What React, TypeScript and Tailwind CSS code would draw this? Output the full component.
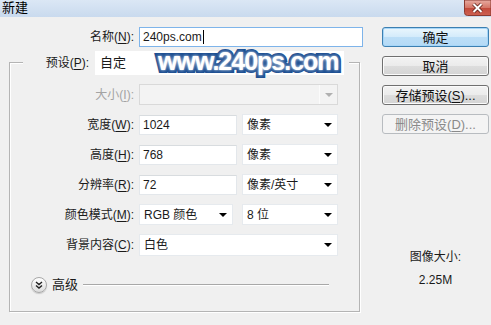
import React from "react";

const Arrow = ({ c = "#000" }: { c?: string }) => (
  <svg width="8" height="4" viewBox="0 0 8 4">
    <path d="M0 0H8L4 4Z" fill={c} />
  </svg>
);

function Lbl({ pre, k, disabled, w = "w-[124px]" }: { pre: string; k: string; disabled?: boolean; w?: string }) {
  return (
    <span className={`${w} shrink-0 text-right leading-[20px] ${disabled ? "text-[#a3a3a3]" : "text-[#1a1a1a]"}`}>
      {pre}(<span className="underline underline-offset-2">{k}</span>):
    </span>
  );
}

function Combo({ text, w, h = "h-[21px]" }: { text: string; w: string; h?: string }) {
  return (
    <div className={`${w} ${h} shrink-0 bg-white border border-[#e6eaee] flex items-center justify-between pl-[4px] pr-[5px]`}>
      <span className="leading-none">{text}</span>
      <Arrow />
    </div>
  );
}

function Input({ text, w }: { text: string; w: string }) {
  return (
    <div className={`${w} h-[20px] shrink-0 bg-white border border-[#e3e7eb] border-t-[#d8dcdf] flex items-center pl-[3px]`}>
      <span className="leading-none">{text}</span>
    </div>
  );
}

function Btn({ children, primary, disabled }: { children: React.ReactNode; primary?: boolean; disabled?: boolean }) {
  const cls = disabled
    ? "border-[#b8bcc0] bg-[#f4f4f4] text-[#8a8a8a]"
    : primary
    ? "border-[#3c7fb1] bg-[linear-gradient(to_bottom,#eaf6fd,#d3ebfb_50%,#bcdef7_51%,#b4daf6)] text-[#111] shadow-[inset_0_0_0_1px_#a6d6f8]"
    : "border-[#707070] bg-[linear-gradient(to_bottom,#f3f3f3,#ebebeb_50%,#dddddd_51%,#d4d4d4)] text-[#111] shadow-[inset_0_0_0_1px_#fbfbfb]";
  return (
    <div className={`w-[107px] h-[20px] rounded-[3px] border flex items-center justify-center leading-none ${cls}`}>
      {children}
    </div>
  );
}

function CloseIcon() {
  return (
    <svg width="27" height="16" viewBox="0 0 27 16">
      <defs>
        <linearGradient id="cg" x1="0" y1="0" x2="0" y2="1">
          <stop offset="0" stopColor="#e7aca2" />
          <stop offset="0.5" stopColor="#d57667" />
          <stop offset="0.51" stopColor="#c24a3b" />
          <stop offset="1" stopColor="#cd6152" />
        </linearGradient>
      </defs>
      <path d="M0.5 0V12.5Q0.5 15.5 3.5 15.5H27V0Z" fill="url(#cg)" stroke="#8a3b32" strokeWidth="1" />
      <path d="M9.5 4L17.5 12M17.5 4L9.5 12" stroke="#5e1f16" strokeWidth="3.6" />
      <path d="M9.5 4L17.5 12M17.5 4L9.5 12" stroke="#ffffff" strokeWidth="2" />
    </svg>
  );
}

export default function App() {
  return (
    <div className="w-[491px] h-[325px] bg-[#f0f0f0] relative overflow-hidden text-[12px] font-['Liberation_Sans','Noto_Sans_CJK_SC',sans-serif] text-[#1a1a1a]">
      {/* title bar */}
      <div className="h-[17px] bg-[linear-gradient(to_bottom,#dbe7f5,#c9daee)] flex items-start justify-between">
        <span className="pl-[2px] pt-[1px] leading-[14px] text-[13px] text-black">新建</span>
        <div className="shrink-0 leading-none flex">
          <CloseIcon />
        </div>
      </div>

      <div className="flex">
        {/* left column */}
        <div className="flex flex-col">
          <div className="flex mt-[10px] items-center">
            <Lbl pre="名称" k="N" w="w-[134px]" />
            <div className="ml-[5px] w-[224px] h-[20px] bg-white border border-[#7eb4ea] flex items-center pl-[3px]">
              <span className="leading-none">240ps.com</span>
              <span className="w-px h-[14px] bg-black ml-[1px]" />
            </div>
          </div>

          {/* group box */}
          <div className="ml-[9px] mt-[15px] w-[351px] border border-[#b4b4b4] shadow-[1px_1px_0_#ffffff,inset_1px_1px_0_#ffffff] flex flex-col pb-[18px]">
            <div className="-mt-[12px] ml-[13px] w-[326px] h-[24px] bg-[#f0f0f0] flex items-center">
              <Lbl pre="预设" k="P" w="w-[66px]" />
              <div className="ml-[6px] w-[249px] h-[24px] bg-white flex items-center pl-[5px] text-[13px]">自定</div>
            </div>

            <div className="flex flex-col gap-[9px] mt-[9px]">
              <div className="flex items-center h-[21px]">
                <Lbl pre="大小" k="I" disabled />
                <div className="ml-[5px] w-[199px] h-[21px] border border-[#d9d9d9] bg-[#f3f3f3] flex items-center justify-end">
                  <div className="h-full w-[18px] border-l border-[#fbfbfb] flex items-center justify-center">
                    <Arrow c="#b0b0b0" />
                  </div>
                </div>
              </div>
              <div className="flex items-center h-[21px]">
                <Lbl pre="宽度" k="W" />
                <div className="ml-[5px]"><Input text="1024" w="w-[98px]" /></div>
                <div className="ml-[5px]"><Combo text="像素" w="w-[96px]" /></div>
              </div>
              <div className="flex items-center h-[21px]">
                <Lbl pre="高度" k="H" />
                <div className="ml-[5px]"><Input text="768" w="w-[98px]" /></div>
                <div className="ml-[5px]"><Combo text="像素" w="w-[96px]" /></div>
              </div>
              <div className="flex items-center h-[21px]">
                <Lbl pre="分辨率" k="R" />
                <div className="ml-[5px]"><Input text="72" w="w-[98px]" /></div>
                <div className="ml-[5px]"><Combo text="像素/英寸" w="w-[96px]" /></div>
              </div>
              <div className="flex items-center h-[21px]">
                <Lbl pre="颜色模式" k="M" />
                <div className="ml-[5px]"><Combo text="RGB 颜色" w="w-[94px]" /></div>
                <div className="ml-[9px]"><Combo text="8 位" w="w-[96px]" /></div>
              </div>
              <div className="flex items-center h-[21px]">
                <Lbl pre="背景内容" k="C" />
                <div className="ml-[5px]"><Combo text="白色" w="w-[199px]" h="h-[22px]" /></div>
              </div>
            </div>

            <div className="flex items-center h-[17px] mt-[21px]">
              <div className="ml-[21px] w-[16px] h-[16px] rounded-full border border-[#a8a8a8] bg-[linear-gradient(to_bottom,#ffffff,#dcdcdc)] flex items-center justify-center shadow-[0_1px_1px_#c8c8c8]">
                <svg width="8" height="8" viewBox="0 0 8 8">
                  <path d="M1 1L4 3.5L7 1M1 4.5L4 7L7 4.5" stroke="#222" strokeWidth="1.4" fill="none" />
                </svg>
              </div>
              <span className="ml-[5px] leading-none text-[13px]">高级</span>
              <div className="ml-[5px] mr-[30px] flex-1 h-px bg-[#a8a8a8] shadow-[0_1px_0_#ffffff]" />
            </div>
          </div>
        </div>

        {/* right column */}
        <div className="ml-[19px] flex flex-col">
          <div className="mt-[10px] flex flex-col gap-[9px] text-[13px]">
            <Btn primary>确定</Btn>
            <Btn>取消</Btn>
            <Btn>
              存储预设(<span className="underline underline-offset-2">S</span>)...
            </Btn>
            <Btn disabled>
              删除预设(<span className="underline underline-offset-2">D</span>)...
            </Btn>
          </div>
          <div className="w-[107px] mt-[115px] text-center leading-[16px]">图像大小:</div>
          <div className="w-[107px] mt-[7px] text-center leading-[16px]">2.25M</div>
        </div>
      </div>

      {/* watermark */}
      <span className="absolute left-[158px] top-[45px] text-[25px] font-bold leading-[32px] text-white tracking-[-1px] [-webkit-text-stroke:6px_#1d4f92] [paint-order:stroke_fill] [text-shadow:0_0_3px_#ffffff]">
        www.240ps.com
      </span>
    </div>
  );
}
